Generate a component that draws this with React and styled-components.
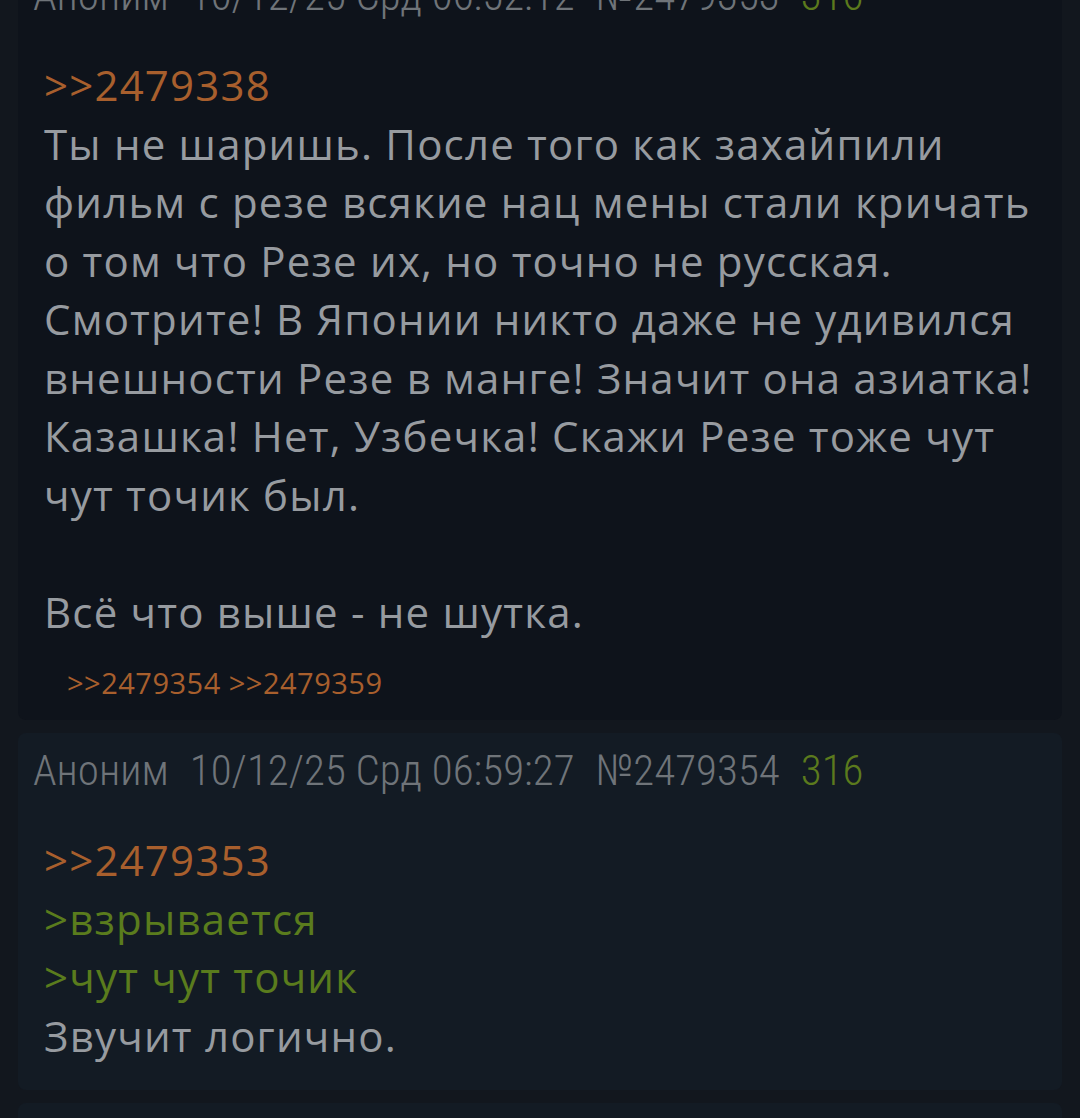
import styled, { createGlobalStyle } from "styled-components";

const GlobalStyle = createGlobalStyle`
  html, body {
    margin: 0;
    padding: 0;
    background: #12171e;
    overflow: hidden;
  }
  body {
    font-family: "Open Sans", Roboto, sans-serif;
  }
`;

const Page = styled.div`
  height: 1118px;
  padding: 0 18px;
  overflow: hidden;
`;

const Thread = styled.div`
  display: flex;
  flex-direction: column;
  gap: 13px;
  margin-top: -42px;
`;

const Post = styled.div`
  background: ${(p) => (p.$active ? "#0e131b" : "#131b24")};
  border-radius: 8px;
  padding: 17px 0 ${(p) => (p.$active ? "19px" : "25px")};
`;

const Header = styled.div`
  display: flex;
  align-items: center;
  gap: 21px;
  height: 40px;
  padding-left: 15px;
  font-family: "Roboto Condensed", "Liberation Sans Narrow", Roboto, sans-serif;
  font-size: 43px;
  font-weight: 300;
  color: #6f7479;
  white-space: nowrap;
`;

const Meta = styled.span`
  color: ${(p) => (p.$green ? "#5b7a1d" : "inherit")};
`;

const Body = styled.div`
  margin-top: 41px;
  padding-left: 26px;
  font-size: 42px;
  letter-spacing: 1.2px;
  line-height: 58.5px;
  color: #979ba0;
`;

const Line = styled.div`
  white-space: nowrap;
  min-height: 58.5px;
  color: ${(p) =>
    p.$kind === "link" ? "#a85f2d" : p.$kind === "quote" ? "#5a7c1d" : "inherit"};
`;

const Replies = styled.div`
  display: flex;
  gap: 8px;
  margin-top: 24px;
  padding-left: 49px;
  font-size: 29px;
  letter-spacing: 0.5px;
  line-height: 36px;
  color: #a85f2d;
`;

const posts = [
  {
    active: true,
    date: "10/12/25 Срд 06:52:12",
    num: "№2479353",
    count: "316",
    lines: [
      [">>2479338", "link"],
      ["Ты не шаришь. После того как захайпили"],
      ["фильм с резе всякие нац мены стали кричать"],
      ["о том что Резе их, но точно не русская."],
      ["Смотрите! В Японии никто даже не удивился"],
      ["внешности Резе в манге! Значит она азиатка!"],
      ["Казашка! Нет, Узбечка! Скажи Резе тоже чут"],
      ["чут точик был."],
      [""],
      ["Всё что выше - не шутка."],
    ],
    replies: [">>2479354", ">>2479359"],
  },
  {
    date: "10/12/25 Срд 06:59:27",
    num: "№2479354",
    count: "316",
    lines: [
      [">>2479353", "link"],
      [">взрывается", "quote"],
      [">чут чут точик", "quote"],
      ["Звучит логично."],
    ],
    replies: [],
  },
  {
    date: "10/12/25 Срд 07:01:40",
    num: "№2479359",
    count: "316",
    lines: [[">>2479353", "link"]],
    replies: [],
  },
];

export default function App() {
  return (
    <Page>
      <GlobalStyle />
      <Thread>
        {posts.map((p) => (
          <Post key={p.num} $active={p.active}>
            <Header>
              <Meta>Аноним</Meta>
              <Meta>{p.date}</Meta>
              <Meta>{p.num}</Meta>
              <Meta $green>{p.count}</Meta>
            </Header>
            <Body>
              {p.lines.map(([text, kind], i) => (
                <Line key={i} $kind={kind}>
                  {text}
                </Line>
              ))}
            </Body>
            {p.replies.length > 0 && (
              <Replies>
                {p.replies.map((r) => (
                  <span key={r}>{r}</span>
                ))}
              </Replies>
            )}
          </Post>
        ))}
      </Thread>
    </Page>
  );
}
